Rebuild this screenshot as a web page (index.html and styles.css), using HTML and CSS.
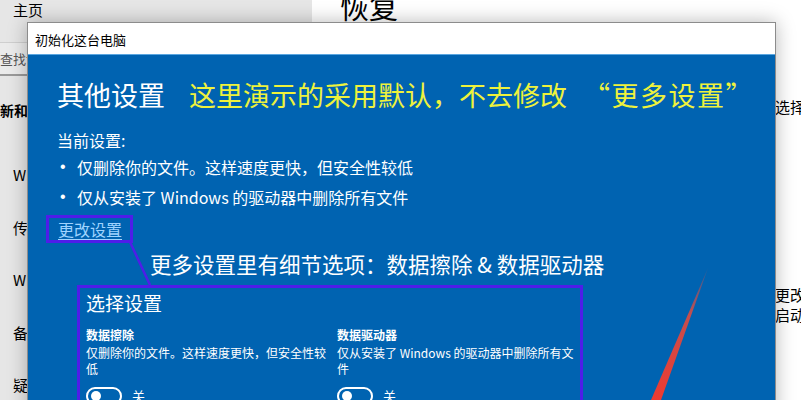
FILE: index.html
```html
<!DOCTYPE html>
<html lang="zh-CN">

<head>
    <meta charset="UTF-8">
    <meta name="viewport" content="width=device-width, initial-scale=1.0">
    <title>恢复</title>
    <link rel="stylesheet" href="styles.css">
</head>

<body>
    <div class="settings">
        <nav class="sidebar">
            <div class="home">主页</div>
            <div class="search">查找设置</div>
            <div class="group">更新和安全</div>
            <ul class="nav-list">
                <li>Windows 更新</li>
                <li>传递优化</li>
                <li>Windows 安全中心</li>
                <li>备份</li>
                <li>疑难解答</li>
            </ul>
        </nav>

        <main class="page">
            <h1>恢复</h1>
            <p class="line reset-line"><span class="lead">如果电脑未正常运行，重置电脑可能会解决问题。重置时，你可以</span>选择保留个人文件或删除个人文件</p>
            <p class="line advanced-line"><span class="lead">从设备或磁盘（例如优盘或光盘）启动，修改电脑固件设置，或者</span>更改 Windows 启动设置</p>
            <p class="line"><span class="lead">设置，或者从系统映像还原整个系统。此操作将会让你的电脑重新</span>启动。</p>
        </main>
    </div>

    <div class="dialog">
        <div class="titlebar">初始化这台电脑</div>
        <div class="panel">
            <h2>其他设置<span class="note-yellow">这里演示的采用默认，不去修改<span class="quote">“更多设置”</span></span></h2>
            <p class="current">当前设置:</p>
            <ul class="bullets">
                <li>仅删除你的文件。这样速度更快，但安全性较低</li>
                <li>仅从安装了 Windows 的驱动器中删除所有文件</li>
            </ul>
            <div class="change"><a href="#" class="change-link">更改设置</a></div>
            <p class="note">更多设置里有细节选项：数据擦除 &amp; 数据驱动器</p>

            <section class="choose">
                <h3>选择设置</h3>
                <div class="options">
                    <div class="option">
                        <h4>数据擦除</h4>
                        <p>仅删除你的文件。这样速度更快，但安全性较低</p>
                        <div class="toggle-row"><span class="toggle"></span><span>关</span></div>
                    </div>
                    <div class="option">
                        <h4>数据驱动器</h4>
                        <p>仅从安装了 Windows 的驱动器中删除所有文件</p>
                        <div class="toggle-row"><span class="toggle"></span><span>关</span></div>
                    </div>
                </div>
            </section>
        </div>

        <!-- callout lines drawn over the dialog, in page coordinates -->
        <svg class="marks" width="749" height="400">
            <defs>
                <linearGradient id="redFade" x1="0" y1="0" x2="0" y2="1">
                    <stop offset="0" stop-color="#e84a3c" stop-opacity="0.2" />
                    <stop offset="0.35" stop-color="#e84a3c" stop-opacity="0.85" />
                    <stop offset="1" stop-color="#ee3a30" />
                </linearGradient>
            </defs>
            <g transform="translate(-27,-22)">
                <line x1="130" y1="242" x2="150" y2="285" stroke="#4f1de8" stroke-width="2.5" />
                <polygon points="708,268 661,400 651,400" fill="url(#redFade)" />
            </g>
        </svg>
    </div>
</body>

</html>
```

FILE: styles.css
```css
* {
    margin: 0;
    padding: 0;
    box-sizing: border-box;
}

body {
    width: 801px;
    height: 400px;
    overflow: hidden;
    position: relative;
    font-family: "Noto Sans CJK SC", "Noto Sans", sans-serif;
    color: #000;
    background: #fff;
}

.settings {
    display: flex;
    height: 400px;
}

/* left navigation column */
.sidebar {
    width: 312px;
    flex-shrink: 0;
    background: #e6e6e6;
    overflow: hidden;
}

.home {
    font-size: 15px;
    line-height: 20px;
    padding-left: 13px;
}

.search {
    margin-top: 22px;
    height: 34px;
    line-height: 31px;
    font-size: 13px;
    color: #555;
    background: #ebebeb;
    border-top: 1px solid #cfcfcf;
    border-bottom: 2px solid #9a9a9a;
}

.group {
    margin-top: 24px;
    margin-left: -14px;
    font-size: 14px;
    font-weight: 700;
    line-height: 20px;
}

.nav-list {
    list-style: none;
    margin-top: 29px;
}

.nav-list li {
    font-size: 15px;
    line-height: 52.5px;
    padding-left: 13px;
}

/* right page column */
.page {
    flex: 1;
    padding-left: 28px;
    overflow: hidden;
}

.page h1 {
    font-size: 29px;
    font-weight: 400;
    line-height: 36px;
    margin-top: -12px;
}

.line {
    font-size: 15px;
    line-height: 20px;
    white-space: nowrap;
}

.reset-line {
    margin-top: 73px;
}

.advanced-line {
    margin-top: 168px;
}

/* modal window */
.dialog {
    position: absolute;
    left: 27px;
    top: 22px;
    width: 749px;
    height: 400px;
    border: 1px solid #8c8c8c;
    background: #0063b1;
    box-shadow: 0 0 18px rgba(0, 0, 0, 0.28);
}

.titlebar {
    height: 32px;
    line-height: 33px;
    padding-left: 7px;
    font-size: 13px;
    background: #fff;
    border-bottom: 1px solid #5aa6e0;
}

.panel {
    padding: 22px 29px 0;
    color: #fff;
}

.panel h2 {
    font-size: 27px;
    font-weight: 400;
    line-height: 36px;
    white-space: nowrap;
}

.note-yellow {
    color: #eef23c;
    margin-left: 24px;
}

.quote {
    margin-left: 16px;
    letter-spacing: 1.5px;
}

.current {
    margin-top: 15px;
    font-size: 16px;
    line-height: 24px;
}

.bullets {
    list-style: none;
}

.bullets li {
    font-size: 16px;
    line-height: 30px;
    display: flex;
}

.bullets li::before {
    content: "•";
    width: 17px;
    padding-left: 3px;
    font-family: "Liberation Sans", sans-serif;
}

.change {
    margin-top: 3px;
}

.change-link {
    display: inline-block;
    margin-left: -11px;
    padding: 0 8px 0 9px;
    border: 3px solid #4f1de8;
    font-size: 16px;
    line-height: 22px;
    color: #9fd3ff;
    text-decoration: underline;
    text-underline-offset: 3px;
}

.note {
    margin-top: 6px;
    margin-left: 93px;
    font-size: 21.5px;
    line-height: 30px;
}

.choose {
    margin-top: 6px;
    margin-left: 20px;
    width: 506px;
    height: 140px;
    padding: 2px 1px 0 6px;
    border: 3px solid #4f1de8;
}

.choose h3 {
    font-size: 19px;
    font-weight: 400;
    line-height: 26px;
}

.options {
    display: grid;
    grid-template-columns: 246px 242px;
    column-gap: 5px;
    margin-top: 10px;
}

.option h4 {
    font-size: 12px;
    font-weight: 700;
    line-height: 18px;
}

.option p {
    margin-top: 1px;
    font-size: 12px;
    line-height: 16px;
}

.toggle-row {
    display: flex;
    align-items: center;
    gap: 10px;
    margin-top: 9px;
    font-size: 13px;
}

.toggle {
    position: relative;
    width: 36px;
    height: 18px;
    border: 2px solid #fff;
    border-radius: 9px;
}

.toggle::after {
    content: "";
    position: absolute;
    left: 3px;
    top: 2px;
    width: 10px;
    height: 10px;
    border-radius: 50%;
    background: #fff;
}

.marks {
    position: absolute;
    left: -1px;
    top: -1px;
    pointer-events: none;
}
```
